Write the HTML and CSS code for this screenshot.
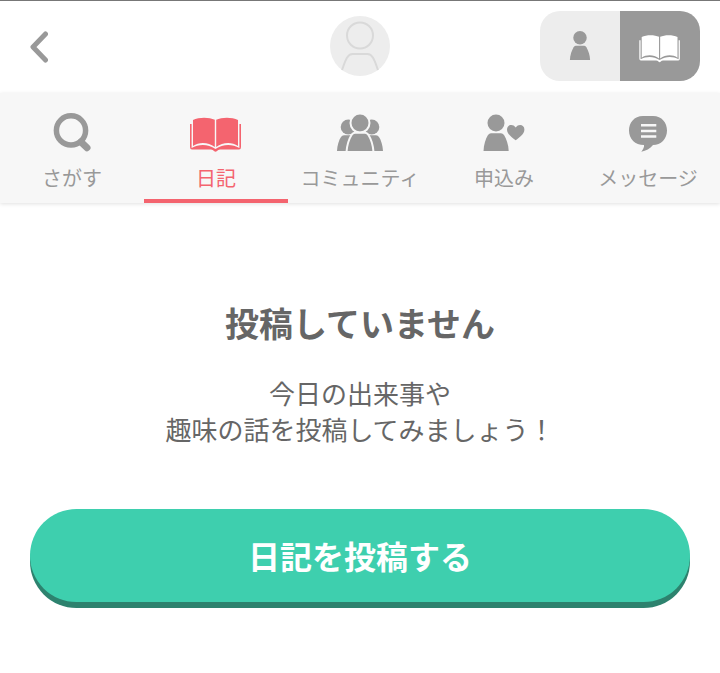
FILE: index.html
```html
<!DOCTYPE html>
<html lang="ja">
<head>
<meta charset="utf-8">
<meta name="viewport" content="width=device-width">
<title>日記</title>
<link rel="stylesheet" href="styles.css">
</head>
<body>
<svg class="symbols" aria-hidden="true">
  <symbol id="book" viewBox="0 0 60 44">
    <path d="M7 10C13 7 23 7 28.800 9.800V37C22 32 13 32 7 36ZM30.200 9.800C36 7 46 7 52 10V36C46 32 37 32 30.200 37Z"/>
    <path d="M4 14H5.600V38C13 34 22 34 29.500 39C37 34 46 34 53.400 38V14H55V37Q55 39.500 53 39.500H34Q32 39.500 31 41Q29.500 42.500 28 41Q27 39.500 25 39.500H6Q4 39.500 4 37Z"/>
  </symbol>
  <symbol id="person" viewBox="0 2 60 44">
    <circle cx="30" cy="13" r="8.500"/>
    <path d="M17.300 41C17.500 35 19.500 29 22 25Q23.300 23.200 25 23.200H35Q36.700 23.200 38 25C40.500 29 42.500 35 42.700 41Z"/>
  </symbol>
</svg>

<header class="header">
  <div class="header-side">
    <a class="back" href="#" aria-label="戻る">
      <svg class="back-icon" viewBox="0 0 18 32"><path d="M15.500 3L3 16L15.500 29"/></svg>
    </a>
  </div>
  <a class="avatar" href="#" aria-label="プロフィール">
    <svg viewBox="0 0 60 60"><circle cx="30" cy="19.500" r="13"/><path d="M12 54C15 46 17 38 22.500 38H37.500C43 38 45 46 48 54"/></svg>
  </a>
  <div class="header-side header-end">
    <div class="toggle">
      <button class="toggle-button" type="button" aria-label="プロフィール"><svg class="toggle-icon"><use href="#person"/></svg></button>
      <button class="toggle-button selected" type="button" aria-label="日記"><svg class="toggle-icon"><use href="#book"/></svg></button>
    </div>
  </div>
</header>

<nav class="tabs">
  <a class="tab" href="#">
    <svg class="tab-icon" viewBox="0 0 60 44"><circle class="lens" cx="29" cy="20.400" r="14.600"/><path class="handle" d="M39 32L45 37.700"/></svg>
    <span>さがす</span>
  </a>
  <a class="tab current" href="#" aria-current="page">
    <svg class="tab-icon"><use href="#book"/></svg>
    <span>日記</span>
  </a>
  <a class="tab" href="#">
    <svg class="tab-icon" viewBox="0 0 60 44">
      <circle cx="18.300" cy="17" r="7.600"/><circle cx="41.700" cy="17" r="7.600"/>
      <path d="M7 41C7.300 35 9 30 11 27Q12 25.300 14 25.300H46Q48 25.300 49 27C51 30 52.700 35 53 41Z"/>
      <g class="front">
        <circle cx="30" cy="13" r="9.500"/>
        <path d="M16.500 42C17 35 19 29 21.500 25Q22.800 22.800 25 22.800H35Q37.200 22.800 38.500 25C41 29 43 35 43.500 42Z"/>
      </g>
    </svg>
    <span>コミュニティ</span>
  </a>
  <a class="tab" href="#">
    <svg class="tab-icon" viewBox="0 0 60 44">
      <circle cx="22" cy="13" r="8.500"/>
      <path d="M9.500 41C9.700 35 11.500 29 14 25Q15.300 23.200 17 23.200H27Q28.700 23.200 30 25C32.500 29 34.500 35 34.700 41Z"/>
      <path d="M41.700 30.200C38 27.500 33 24 33 19.500C33 14.500 39 13.500 41.700 17.500C44.400 13.500 50.400 14.500 50.400 19.500C50.400 24 45.400 27.500 41.700 30.200Z"/>
    </svg>
    <span>申込み</span>
  </a>
  <a class="tab" href="#">
    <svg class="tab-icon" viewBox="0 0 60 44">
      <path d="M25 6H35C44 6 49 13 49 20.500C49 29 43 35 35 35C32 38.500 28 41 23.300 41.700C25 39.500 26.500 37 26 35C17 35 11 29 11 20.500C11 13 16 6 25 6Z"/>
      <path class="lines" d="M23 15.300H38.300M23 20.900H38.300M23 26.500H38.300"/>
    </svg>
    <span>メッセージ</span>
  </a>
</nav>

<main class="content">
  <h1 class="title">投稿していません</h1>
  <p class="lead">今日の出来事や<br>趣味の話を投稿してみましょう！</p>
  <button class="post" type="button">日記を投稿する</button>
</main>
</body>
</html>
```
FILE: styles.css
```css
* {
  box-sizing: border-box;
}

body {
  margin: 0;
  background: #fff;
  color: #666;
  font-family: "Noto Sans CJK JP", sans-serif;
}

button {
  border: 0;
  padding: 0;
  font-family: inherit;
  cursor: pointer;
}

svg {
  display: block;
}

.symbols {
  display: none;
}

.header {
  display: flex;
  align-items: center;
  padding: 10px 20px 12px;
  border-top: 1px solid #777;
}

.header-side {
  display: flex;
  flex: 1;
}

.header-end {
  justify-content: flex-end;
}

.back {
  padding: 2px 10px 0;
}

.back-icon {
  width: 18px;
  height: 32px;
  fill: none;
  stroke: #999;
  stroke-width: 5;
  stroke-linecap: round;
  stroke-linejoin: round;
}

.avatar {
  width: 60px;
  border-radius: 50%;
  background: #ededed;
  fill: none;
  stroke: #d9d9d9;
  stroke-width: 2;
}

.toggle {
  display: flex;
  overflow: hidden;
  border-radius: 20px;
}

.toggle-button {
  display: flex;
  align-items: center;
  justify-content: center;
  width: 80px;
  height: 70px;
  background: #ededed;
  color: #999;
}

.toggle-button.selected {
  background: #999;
  color: #fff;
}

.toggle-icon {
  width: 48px;
  height: 35px;
  fill: currentColor;
}

.tabs {
  display: flex;
  background: #f7f7f7;
  box-shadow: 0 1px 4px rgba(0, 0, 0, 0.12);
}

.tab {
  display: flex;
  flex: 1 1 0;
  flex-direction: column;
  align-items: center;
  gap: 10px;
  padding: 17px 0 7px;
  border-bottom: 4px solid transparent;
  color: #999;
  font-size: 20px;
  line-height: 28px;
  text-decoration: none;
  white-space: nowrap;
}

.tab.current {
  border-bottom-color: #f4646f;
  color: #f4646f;
}

.tab-icon {
  width: 60px;
  height: 44px;
  fill: currentColor;
}

.lens {
  fill: none;
  stroke: currentColor;
  stroke-width: 5.5;
}

.handle {
  stroke: currentColor;
  stroke-width: 7;
  stroke-linecap: round;
}

.front {
  stroke: #f7f7f7;
  stroke-width: 2;
}

.lines {
  stroke: #f7f7f7;
  stroke-width: 2.5;
}

.content {
  padding: 95px 30px 60px;
  text-align: center;
}

.title {
  margin: 0;
  font-size: 34px;
  line-height: 50px;
}

.lead {
  margin: 27px 0 62px;
  font-size: 26px;
  line-height: 36px;
}

.post {
  display: block;
  width: 100%;
  margin-bottom: 6px;
  padding: 22px 20px 23px;
  border-radius: 48px;
  background: #3ecfae;
  box-shadow: 0 6px 0 #2d826e;
  color: #fff;
  font-size: 32px;
  font-weight: 700;
  line-height: 48px;
}
```
